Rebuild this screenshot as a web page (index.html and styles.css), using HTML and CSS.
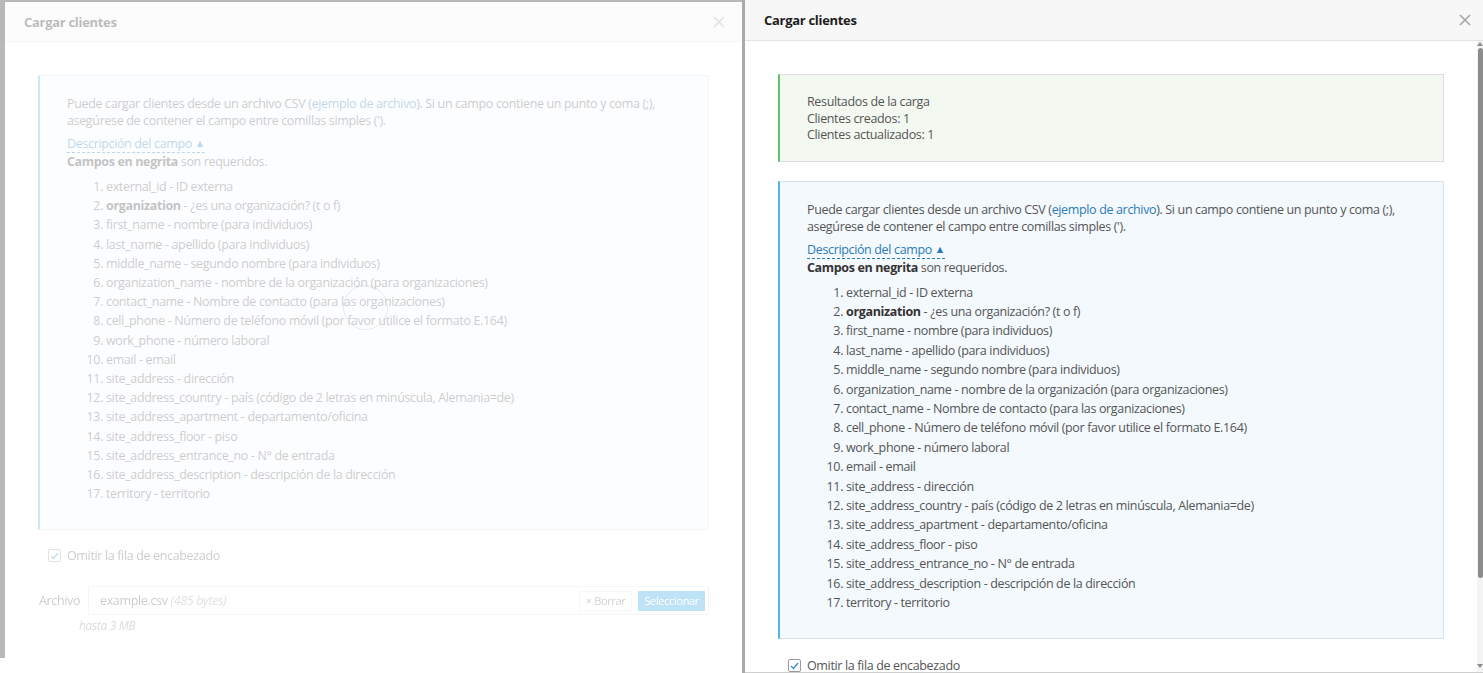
FILE: index.html
```html
<!DOCTYPE html>
<html lang="es">

<head>
    <meta charset="UTF-8">
    <meta name="viewport" content="width=device-width, initial-scale=1.0">
    <title>Cargar clientes</title>
    <link rel="stylesheet" href="styles.css">
</head>

<body>
    <div class="screen">

        <!-- previous frame, fading out -->
        <div class="pane pane-ghost">
            <div class="modal faded">
                <div class="modal-header">
                    <h3>Cargar clientes</h3>
                    <svg class="close" width="12" height="12" viewBox="0 0 12 12"><path d="M1 1 L11 11 M11 1 L1 11" /></svg>
                </div>
                <div class="modal-body">
                    <div class="info">
                        <p>Puede cargar clientes desde un archivo CSV (<a>ejemplo de archivo</a>). Si un campo contiene un punto y coma (;), asegúrese de contener el campo entre comillas simples (').</p>
                        <a class="toggle">Descripción del campo <span class="caret">&#9650;</span></a>
                        <div><b>Campos en negrita</b> son requeridos.</div>
                        <ol>
                            <li>external_id - ID externa</li>
                            <li><b>organization</b> - ¿es una organización? (t o f)</li>
                            <li>first_name - nombre (para individuos)</li>
                            <li>last_name - apellido (para individuos)</li>
                            <li>middle_name - segundo nombre (para individuos)</li>
                            <li>organization_name - nombre de la organización (para organizaciones)</li>
                            <li>contact_name - Nombre de contacto (para las organizaciones)</li>
                            <li>cell_phone - Número de teléfono móvil (por favor utilice el formato E.164)</li>
                            <li>work_phone - número laboral</li>
                            <li>email - email</li>
                            <li>site_address - dirección</li>
                            <li>site_address_country - país (código de 2 letras en minúscula, Alemania=de)</li>
                            <li>site_address_apartment - departamento/oficina</li>
                            <li>site_address_floor - piso</li>
                            <li>site_address_entrance_no - N° de entrada</li>
                            <li>site_address_description - descripción de la dirección</li>
                            <li>territory - territorio</li>
                        </ol>
                    </div>
                    <label class="check">
                        <span class="box"><svg width="9" height="8" viewBox="0 0 9 8"><path d="M1 4 L3.5 6.5 L8 1" /></svg></span>
                        Omitir la fila de encabezado
                    </label>
                    <div class="file-row">
                        <span class="file-label">Archivo</span>
                        <div class="file-input">
                            <span class="file-name">example.csv <i>(485 bytes)</i></span>
                            <button class="btn-clear">&#215; Borrar</button>
                            <button class="btn-pick">Seleccionar</button>
                        </div>
                    </div>
                    <div class="hint">hasta 3 MB</div>
                </div>
                <div class="modal-footer"></div>
                <div class="spinner"></div>
            </div>
        </div>

        <!-- current frame -->
        <div class="pane pane-live">
            <div class="modal">
                <div class="modal-header">
                    <h3>Cargar clientes</h3>
                    <svg class="close" width="12" height="12" viewBox="0 0 12 12"><path d="M1 1 L11 11 M11 1 L1 11" /></svg>
                </div>
                <div class="scroll-area">
                    <div class="modal-body">
                        <div class="result">
                            <div>Resultados de la carga</div>
                            <div>Clientes creados: 1</div>
                            <div>Clientes actualizados: 1</div>
                        </div>
                        <div class="info">
                            <p>Puede cargar clientes desde un archivo CSV (<a>ejemplo de archivo</a>). Si un campo contiene un punto y coma (;), asegúrese de contener el campo entre comillas simples (').</p>
                            <a class="toggle">Descripción del campo <span class="caret">&#9650;</span></a>
                            <div><b>Campos en negrita</b> son requeridos.</div>
                            <ol>
                                <li>external_id - ID externa</li>
                                <li><b>organization</b> - ¿es una organización? (t o f)</li>
                                <li>first_name - nombre (para individuos)</li>
                                <li>last_name - apellido (para individuos)</li>
                                <li>middle_name - segundo nombre (para individuos)</li>
                                <li>organization_name - nombre de la organización (para organizaciones)</li>
                                <li>contact_name - Nombre de contacto (para las organizaciones)</li>
                                <li>cell_phone - Número de teléfono móvil (por favor utilice el formato E.164)</li>
                                <li>work_phone - número laboral</li>
                                <li>email - email</li>
                                <li>site_address - dirección</li>
                                <li>site_address_country - país (código de 2 letras en minúscula, Alemania=de)</li>
                                <li>site_address_apartment - departamento/oficina</li>
                                <li>site_address_floor - piso</li>
                                <li>site_address_entrance_no - N° de entrada</li>
                                <li>site_address_description - descripción de la dirección</li>
                                <li>territory - territorio</li>
                            </ol>
                        </div>
                        <label class="check">
                            <span class="box"><svg width="9" height="8" viewBox="0 0 9 8"><path d="M1 4 L3.5 6.5 L8 1" /></svg></span>
                            Omitir la fila de encabezado
                        </label>
                    </div>
                    <div class="scrollbar">
                        <span class="arrow up"></span>
                        <span class="thumb"></span>
                        <span class="arrow down"></span>
                    </div>
                </div>
            </div>
        </div>

    </div>
</body>

</html>
```

FILE: styles.css
```css
* {
    box-sizing: border-box;
}

body {
    margin: 0;
    font-family: "Open Sans", "Liberation Sans", sans-serif;
    font-size: 12.5px;
    letter-spacing: -0.35px;
    color: #555;
    background-color: #fff;
    overflow: hidden;
}

.screen {
    display: flex;
    height: 673px;
}

.pane {
    height: 673px;
}

.pane-ghost {
    width: 745px;
    border-right: 3px solid #a9a9a9;
    background: linear-gradient(#fff, #fff) bottom / 100% 15px no-repeat, #b8b8b8;
    padding: 2px 0 15px 5px;
}

.pane-ghost .modal {
    position: relative;
    height: 656px;
    background-color: #fff;
    overflow: hidden;
}

.pane-live {
    width: 738px;
    border-bottom: 1px solid #cfcfcf;
}

.faded > * {
    opacity: 0.3;
}

.modal-header {
    display: flex;
    align-items: center;
    justify-content: space-between;
    height: 41px;
    padding: 0 12px 0 19px;
    background-color: #f7f7f7;
    border-bottom: 1px solid #e3e3e3;
}

.pane-ghost .modal-header {
    height: 40px;
    padding-right: 17px;
}

.modal-header h3 {
    margin: 0;
    font-size: 13px;
    font-weight: 700;
    letter-spacing: -0.3px;
    color: #1e1e1e;
}

.close path {
    stroke: #a6a6a6;
    stroke-width: 1.6;
    fill: none;
}

.modal-body {
    padding: 33px 33px 20px 33px;
}

.scroll-area {
    display: flex;
    height: 631px;
    overflow: hidden;
}

.scroll-area .modal-body {
    flex: 1;
}

.scrollbar {
    display: flex;
    flex-direction: column;
    align-items: center;
    width: 6px;
    background-color: #f4f4f4;
}

.thumb {
    width: 5px;
    height: 530px;
    margin-top: 2px;
    background-color: #8c8c8c;
    border-radius: 3px;
}

.arrow {
    width: 0;
    height: 0;
    border-left: 3px solid transparent;
    border-right: 3px solid transparent;
}

.arrow.up {
    margin-top: 1px;
    border-bottom: 4px solid #8c8c8c;
}

.arrow.down {
    margin-top: auto;
    margin-bottom: 4px;
    border-top: 4px solid #8c8c8c;
}

.result {
    background-color: #f3f8f1;
    border: 1px solid #dcdcdc;
    border-left: 2px solid #62c16a;
    padding: 19px 27px 17px;
    line-height: 16.5px;
    margin-bottom: 19px;
}

.info {
    background-color: #f3f9fd;
    border: 1px solid #d6e2ea;
    border-left: 2px solid #4fb6dd;
    padding: 19px 27px 26px;
    line-height: 17px;
}

.info p {
    margin: 0 0 6px;
}

.info a {
    color: #2b7ab8;
}

.toggle {
    display: inline-block;
    border-bottom: 1px dashed #2b7ab8;
    line-height: 17px;
}

.caret {
    font-size: 10.5px;
    line-height: 1;
    vertical-align: 1px;
}

.info b {
    color: #333;
}

.info ol {
    margin: 7px 0 0;
    padding-left: 39px;
}

.info li {
    line-height: 19.4px;
}

.pane-ghost .info li {
    line-height: 19.2px;
}

.check {
    display: flex;
    align-items: center;
    gap: 6px;
    margin-top: 17px;
    padding-left: 10px;
}

.pane-live .check {
    margin-top: 18px;
}

.box {
    display: flex;
    align-items: center;
    justify-content: center;
    width: 13px;
    height: 13px;
    border: 1px solid #9a9a9a;
    border-radius: 2px;
    background-color: #fff;
}

.box path {
    stroke: #3a8ad6;
    stroke-width: 1.4;
    fill: none;
}

.file-row {
    display: flex;
    align-items: center;
    margin-top: 22px;
}

.file-label {
    width: 50px;
    padding-left: 1px;
}

.file-input {
    flex: 1;
    display: flex;
    align-items: center;
    height: 29px;
    border: 1px solid #dcdcdc;
    padding: 0 3px 0 11px;
}

.file-name {
    flex: 1;
}

.file-name i {
    color: #999;
}

.btn-clear,
.btn-pick {
    border: none;
    font-family: inherit;
    letter-spacing: inherit;
    font-size: 11px;
    height: 20px;
    padding: 0 6px;
}

.btn-clear {
    background-color: #fff;
    color: #666;
    border: 1px solid #e4e4e4;
    margin-right: 6px;
}

.btn-pick {
    background-color: #2ba2e0;
    color: #fff;
}

.hint {
    margin: 2px 0 0 41px;
    font-style: italic;
    font-size: 12px;
    color: #888;
}

.modal-footer {
    margin: 12px 0 0 5px;
    border-top: 1px solid #ddd;
}

.spinner {
    position: absolute;
    left: 338px;
    top: 283px;
    width: 45px;
    height: 45px;
    border: 1px solid #bbb;
    border-radius: 50%;
}
```
